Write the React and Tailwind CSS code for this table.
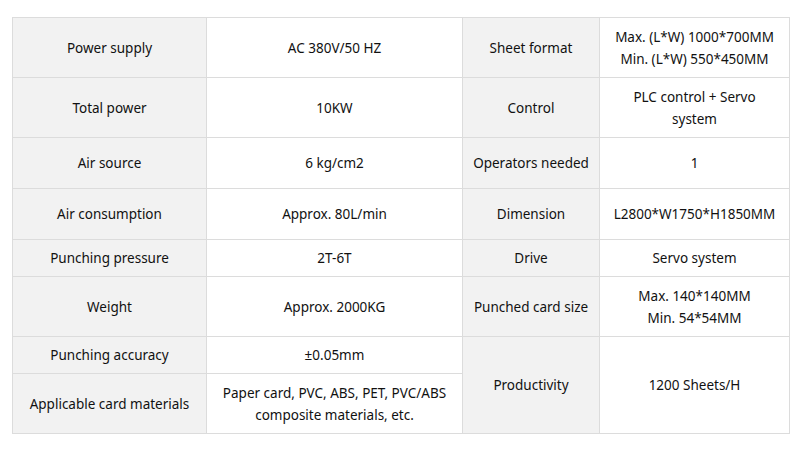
import React from 'react';

const L = 'bg-[#f2f2f2]';

function Cell({ children, label, rowSpan }) {
  return (
    <td
      rowSpan={rowSpan}
      className={`border border-[#dcdcdc] px-2 text-center align-middle leading-[22px] ${label ? L : 'bg-white'}`}
    >
      {children}
    </td>
  );
}

export default function App() {
  return (
    <div className="min-h-[460px] w-[800px] bg-white pt-[17px] pl-[12px]" style={{ fontFamily: '"Noto Sans", "Open Sans", sans-serif' }}>
      <table className="w-[777px] table-fixed border-collapse text-[13.5px] text-[#111]">
        <colgroup>
          <col className="w-[194px]" />
          <col className="w-[256px]" />
          <col className="w-[137px]" />
          <col className="w-[190px]" />
        </colgroup>
        <tbody>
          <tr className="h-[60px]">
            <Cell label>Power supply</Cell>
            <Cell>AC 380V/50 HZ</Cell>
            <Cell label>Sheet format</Cell>
            <Cell>
              Max. (L*W) 1000*700MM
              <br />
              Min. (L*W) 550*450MM
            </Cell>
          </tr>
          <tr className="h-[60px]">
            <Cell label>Total power</Cell>
            <Cell>10KW</Cell>
            <Cell label>Control</Cell>
            <Cell>
              PLC control + Servo
              <br />
              system
            </Cell>
          </tr>
          <tr className="h-[51px]">
            <Cell label>Air source</Cell>
            <Cell>6 kg/cm2</Cell>
            <Cell label>Operators needed</Cell>
            <Cell>1</Cell>
          </tr>
          <tr className="h-[51px]">
            <Cell label>Air consumption</Cell>
            <Cell>Approx. 80L/min</Cell>
            <Cell label>Dimension</Cell>
            <Cell>L2800*W1750*H1850MM</Cell>
          </tr>
          <tr className="h-[37px]">
            <Cell label>Punching pressure</Cell>
            <Cell>2T-6T</Cell>
            <Cell label>Drive</Cell>
            <Cell>Servo system</Cell>
          </tr>
          <tr className="h-[60px]">
            <Cell label>Weight</Cell>
            <Cell>Approx. 2000KG</Cell>
            <Cell label>Punched card size</Cell>
            <Cell>
              Max. 140*140MM
              <br />
              Min. 54*54MM
            </Cell>
          </tr>
          <tr className="h-[37px]">
            <Cell label>Punching accuracy</Cell>
            <Cell>±0.05mm</Cell>
            <Cell label rowSpan={2}>Productivity</Cell>
            <Cell rowSpan={2}>1200 Sheets/H</Cell>
          </tr>
          <tr className="h-[60px]">
            <Cell label>Applicable card materials</Cell>
            <Cell>
              Paper card, PVC, ABS, PET, PVC/ABS
              <br />
              composite materials, etc.
            </Cell>
          </tr>
        </tbody>
      </table>
    </div>
  );
}
